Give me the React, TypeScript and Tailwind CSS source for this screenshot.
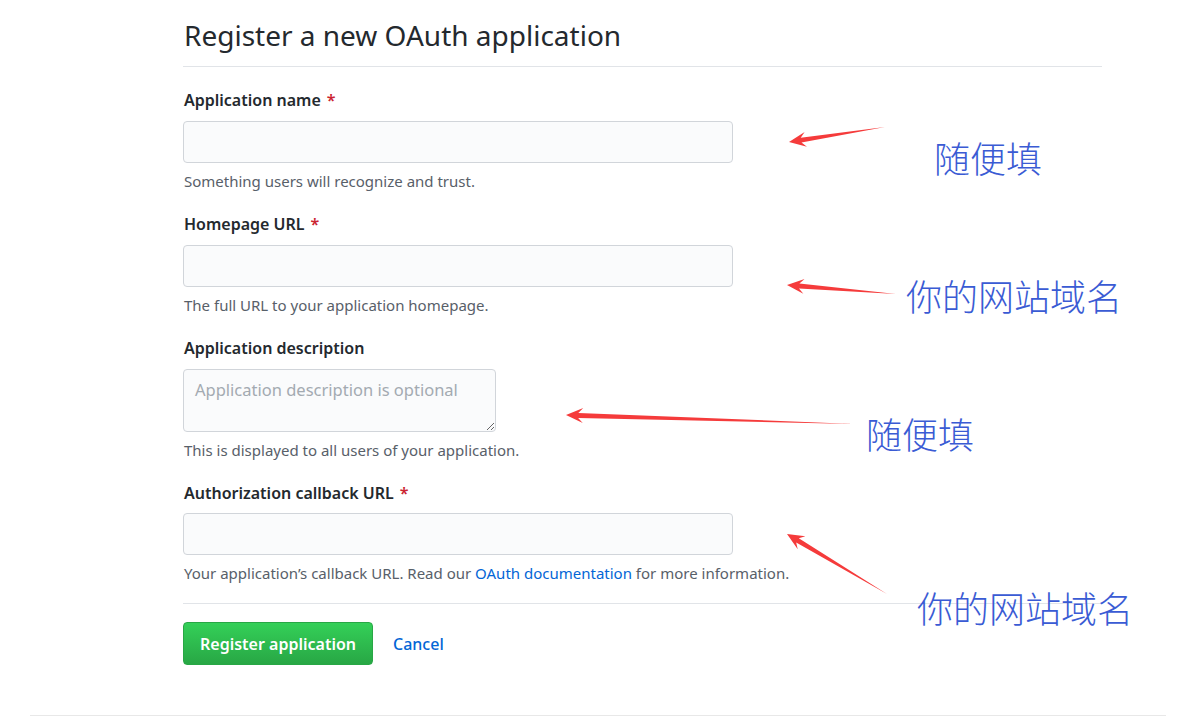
import React from 'react';

const sans = { fontFamily: '"Noto Sans", "Liberation Sans", sans-serif' };

type Pt = [number, number];

// builds a tapered arrow polygon from tail to tip
function arrowPoints(tip: Pt, tail: Pt, headLen = 17, headW = 15, shaftW = 5) {
  const dx = tip[0] - tail[0];
  const dy = tip[1] - tail[1];
  const len = Math.hypot(dx, dy);
  const ux = dx / len;
  const uy = dy / len;
  const nx = -uy;
  const ny = ux;
  const b: Pt = [tip[0] - ux * headLen, tip[1] - uy * headLen];
  const s: Pt = [tip[0] - ux * headLen * 0.72, tip[1] - uy * headLen * 0.72];
  const pts: Pt[] = [
    tip,
    [b[0] + nx * headW / 2, b[1] + ny * headW / 2],
    [s[0] + nx * shaftW / 2, s[1] + ny * shaftW / 2],
    tail,
    [s[0] - nx * shaftW / 2, s[1] - ny * shaftW / 2],
    [b[0] - nx * headW / 2, b[1] - ny * headW / 2],
  ];
  return pts.map(p => p.join(',')).join(' ');
}

const arrows: { tip: Pt; tail: Pt }[] = [
  { tip: [789, 142], tail: [885, 127] },
  { tip: [787, 285], tail: [896, 294] },
  { tip: [566, 415], tail: [854, 424] },
  { tip: [787, 534], tail: [887, 594] },
];

const notes = [
  { text: '随便填', cls: 'left-[934px] top-[139px]' },
  { text: '你的网站域名', cls: 'left-[906px] top-[277px]' },
  { text: '随便填', cls: 'left-[866px] top-[415px]' },
  { text: '你的网站域名', cls: 'left-[917px] top-[589px]' },
];

function Field({ label, required, help, children }: { label: string; required?: boolean; help: React.ReactNode; children: React.ReactNode }) {
  return (
    <div className="mb-[23px]">
      <label className="block h-5 leading-5 text-[16px] font-semibold text-[#24292e] mb-[11px] pl-px">
        {label}
        {required && <span className="text-[#cb2431] ml-1.5">*</span>}
      </label>
      {children}
      <p className="mt-2 h-5 leading-5 text-[15px] text-[#586069] pl-px">{help}</p>
    </div>
  );
}

function TextInput() {
  return (
    <input
      type="text"
      className="block w-[550px] h-[42px] rounded border border-[#d1d5da] bg-[#fafbfc] px-3 outline-none"
    />
  );
}

export default function App() {
  return (
    <div className="relative min-h-[722px] bg-white" style={sans}>
      <div className="w-[919px] ml-[183px]">
        {/* Header */}
        <div className="pt-[17px] pb-[13px] border-b border-[#e1e4e8]">
          <h1 className="text-[28px] leading-[36px] font-normal text-[#24292e] pl-px">Register a new OAuth application</h1>
        </div>

        <form className="pt-[23px]">
          <Field label="Application name" required help="Something users will recognize and trust.">
            <TextInput />
          </Field>
          <Field label="Homepage URL" required help="The full URL to your application homepage.">
            <TextInput />
          </Field>
          <Field label="Application description" help="This is displayed to all users of your application.">
            <textarea
              placeholder="Application description is optional"
              className="block w-[313px] h-[63px] rounded border border-[#d1d5da] bg-[#fafbfc] px-[11px] py-[10px] text-[16.5px] leading-5 text-[#24292e] placeholder:text-[#a3aab1] outline-none"
            />
          </Field>
          <div>
            <label className="block h-5 leading-5 text-[16px] font-semibold text-[#24292e] mb-[10px] pl-px">
              Authorization callback URL
              <span className="text-[#cb2431] ml-1.5">*</span>
            </label>
            <TextInput />
            <p className="mt-2 h-5 leading-5 text-[15px] text-[#586069] pl-px">
              Your application’s callback URL. Read our{' '}
              <a className="text-[#0366d6]">OAuth documentation</a> for more information.
            </p>
          </div>

          <div className="mt-5 border-t border-[#e1e4e8] pt-[18px] flex items-center">
            <button
              type="button"
              className="h-[43px] w-[190px] rounded border border-[#28a745] bg-gradient-to-b from-[#34d058] to-[#28a745] text-white text-[16px] font-semibold"
            >
              Register application
            </button>
            <a className="ml-5 text-[16px] font-medium text-[#0366d6]">Cancel</a>
          </div>
        </form>
      </div>

      <div className="mt-[50px] mx-[30px] border-t border-[#e8e8e8]" />

      {/* annotations */}
      <svg className="absolute inset-0 pointer-events-none" width="1196" height="722">
        {arrows.map((a, i) => (
          <polygon key={i} points={arrowPoints(a.tip, a.tail)} fill="#f53b3b" />
        ))}
      </svg>
      {notes.map((n, i) => (
        <div
          key={i}
          className={`absolute ${n.cls} text-[36px] leading-none font-light text-[#3a5bd4]`}
          style={{ fontFamily: '"Noto Sans CJK SC", sans-serif' }}
        >
          {n.text}
        </div>
      ))}
    </div>
  );
}
